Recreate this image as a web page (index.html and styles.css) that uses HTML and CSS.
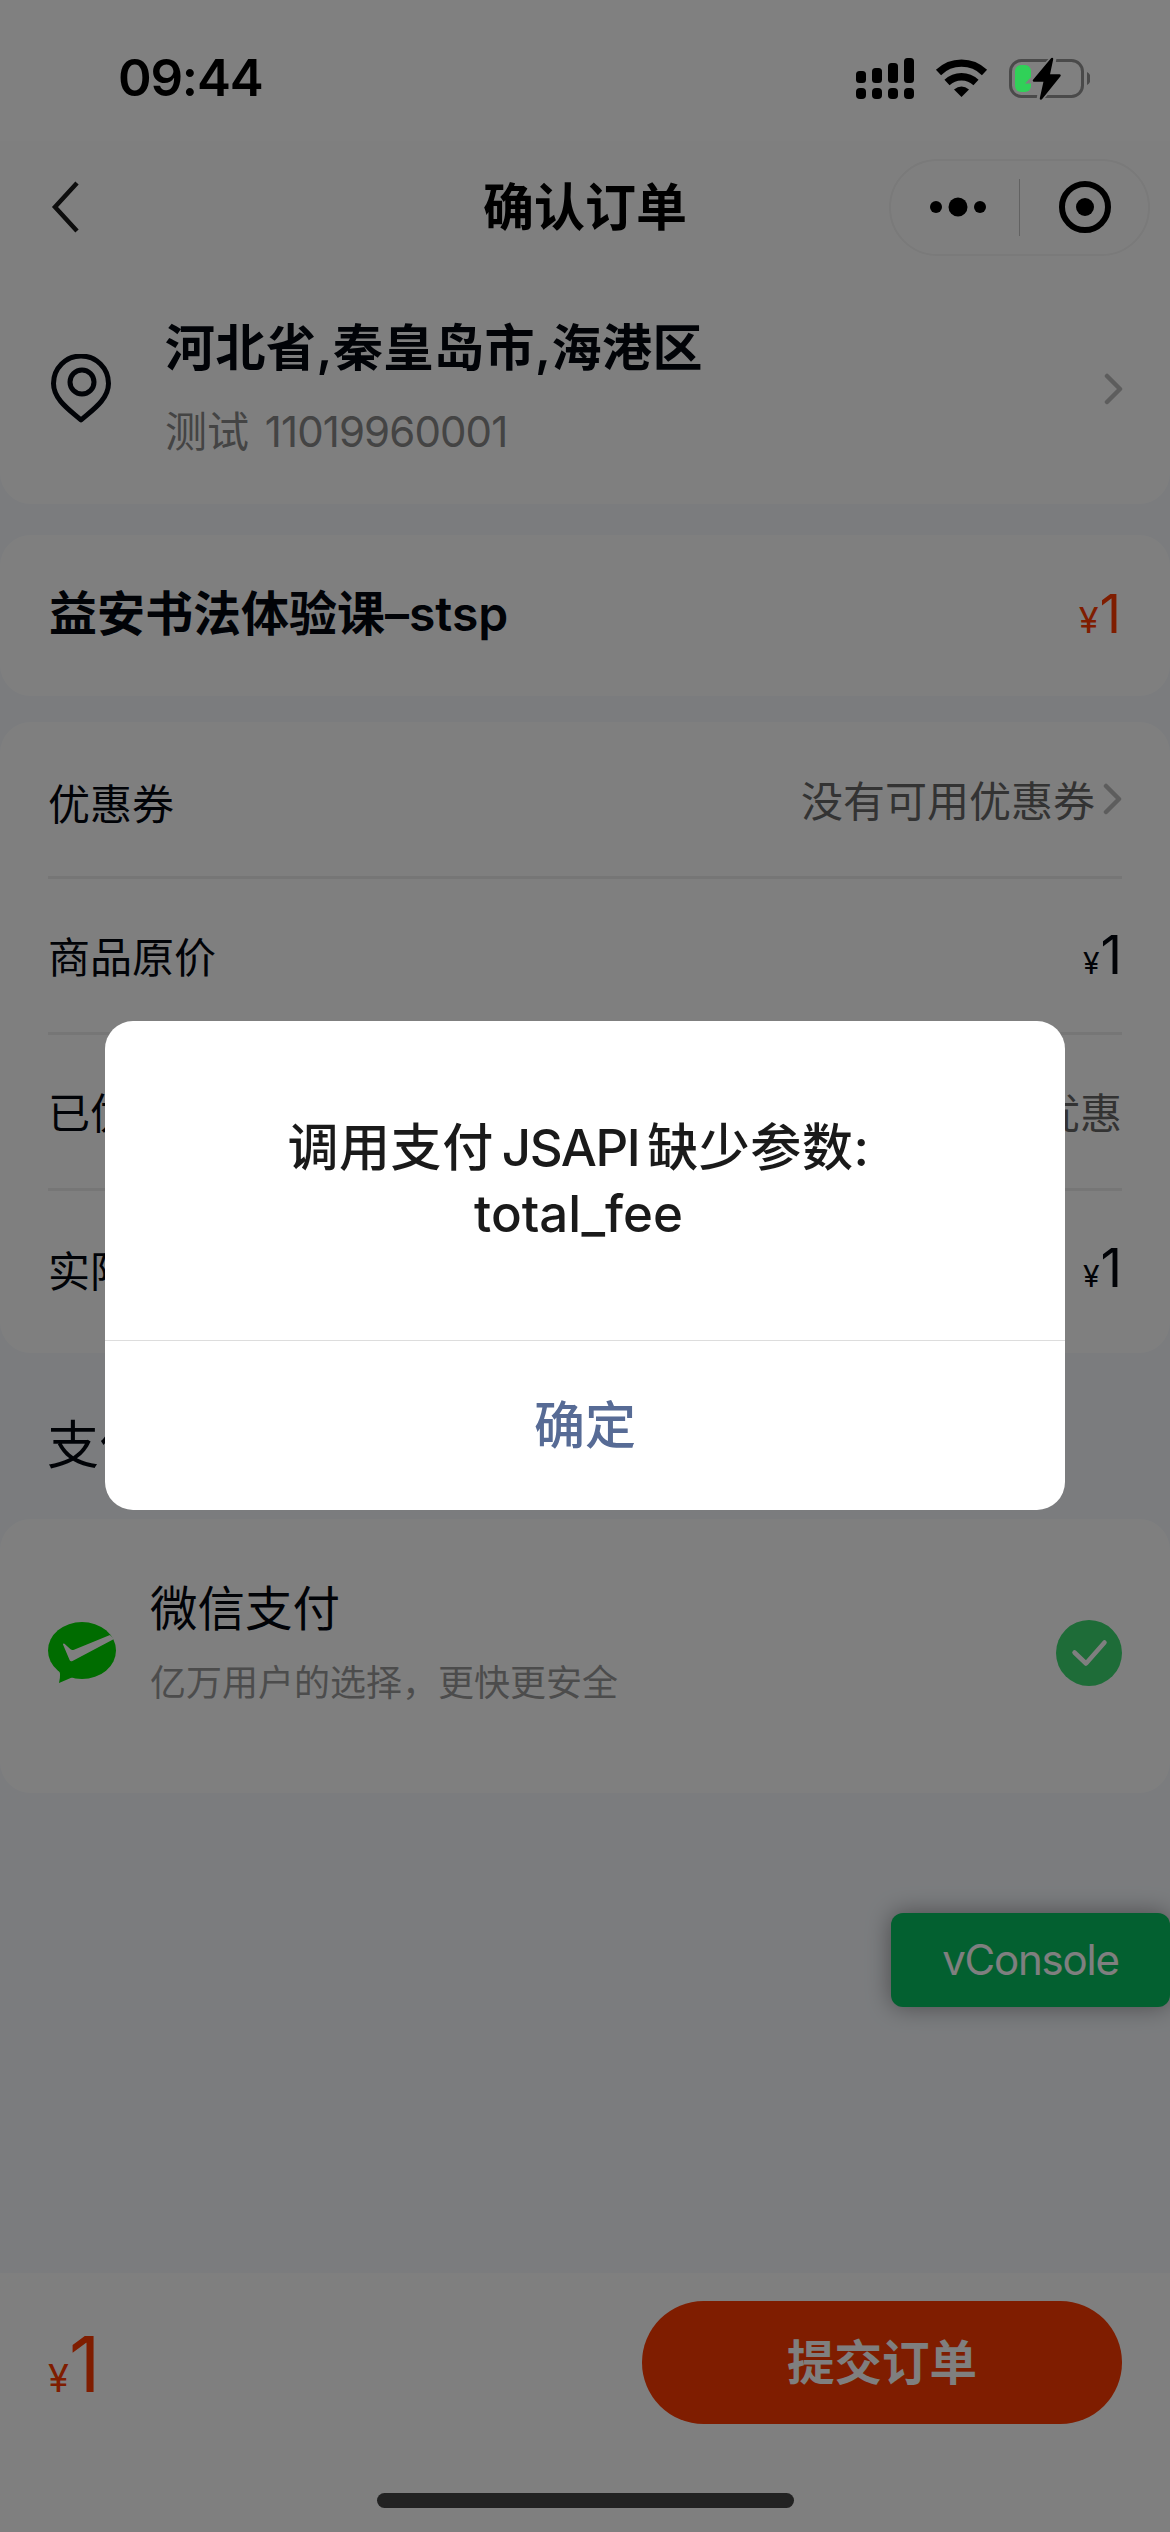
FILE: index.html
```html
<!DOCTYPE html>
<html lang="zh-CN">
<head>
<meta charset="utf-8">
<title>确认订单</title>
<link rel="stylesheet" href="styles.css">
</head>
<body>
<div class="screen">
  <header class="status-bar">
    <span class="time">09:44</span>
    <svg class="status-icons" width="240" height="50" viewBox="0 0 240 50">
      <g>
        <rect x="6" y="18" width="10" height="12" rx="3.5"/>
        <rect x="22" y="15" width="10" height="15" rx="3.5"/>
        <rect x="38" y="10" width="10" height="20" rx="3.5"/>
        <rect x="54" y="5" width="10" height="25" rx="3.5"/>
        <rect x="6" y="35" width="10" height="11" rx="4"/>
        <rect x="22" y="35" width="10" height="11" rx="4"/>
        <rect x="38" y="35" width="10" height="11" rx="4"/>
        <rect x="54" y="35" width="10" height="11" rx="4"/>
      </g>
      <g fill="none" stroke="#000" stroke-width="7.4">
        <path d="M88.500 19.500a33 33 0 0 1 46 0"/>
        <path d="M97 29.500a21 21 0 0 1 29 0"/>
      </g>
      <path d="M104 36.500q7.500-6 15 0l-7.500 7.500z"/>
      <rect x="160.500" y="7.500" width="72" height="36" rx="11" fill="none" stroke="#4a4a4a" stroke-width="3"/>
      <path d="M237 19a7.500 7.500 0 0 1 0 13z" fill="#4a4a4a"/>
      <rect x="165" y="12" width="16" height="27" rx="6" fill="#30d158"/>
      <path d="M203.500 5L182 27.500h11L189.500 46.500 211 22.500h-10.500z" stroke="#808080" stroke-width="6" fill="#808080"/>
      <path d="M202 6L184 27.500h11L191 45.500 209.500 22.500h-11z" stroke="#000" stroke-width="2.500" stroke-linejoin="round"/>
    </svg>
  </header>

  <nav class="nav-bar">
    <svg class="back" width="32" height="54" viewBox="0 0 32 54"><path d="M29 3L7 27l22 24"/></svg>
    <h1>确认订单</h1>
    <div class="capsule">
      <svg width="56" height="24" viewBox="0 0 56 24"><circle cx="6" cy="12" r="6"/><circle cx="28" cy="12" r="9.500"/><circle cx="50" cy="12" r="6"/></svg>
      <i></i>
      <svg width="52" height="52" viewBox="0 0 52 52"><circle cx="26" cy="26" r="23" fill="none" stroke="#000" stroke-width="6"/><circle cx="26" cy="26" r="9"/></svg>
    </div>
  </nav>

  <section class="card address">
    <svg class="pin" width="66" height="70" viewBox="0 0 66 70"><path d="M33 66C23 57 5.500 46 5.500 29.500a27.500 27.500 0 0 1 55 0C60.500 46 43 57 33 66z"/><circle cx="34" cy="28" r="12"/></svg>
    <div class="address-text">
      <p class="region">河北省,秦皇岛市,海港区</p>
      <p class="contact">测试 <span>11019960001</span></p>
    </div>
    <svg class="chevron" width="20" height="32" viewBox="0 0 20 32"><path d="M4 3l13 13L4 29"/></svg>
  </section>

  <section class="card goods">
    <h2>益安书法体验课–stsp</h2>
    <span class="price hot"><small>¥</small>1</span>
  </section>

  <section class="card bill">
    <div class="row coupon"><span>优惠券</span><span class="muted">没有可用优惠券<svg class="chevron" width="20" height="32" viewBox="0 0 20 32"><path d="M4 3l13 13L4 29"/></svg></span></div>
    <div class="row"><span>商品原价</span><span class="price"><small>¥</small>1</span></div>
    <div class="row"><span>已优惠</span><span class="muted">无优惠</span></div>
    <div class="row"><span>实际支付</span><span class="price"><small>¥</small>1</span></div>
  </section>

  <h3 class="section-title">支付方式</h3>

  <section class="card pay">
    <svg width="68" height="64" viewBox="0 0 68 64"><ellipse cx="34" cy="29.500" rx="34" ry="28.500" fill="#00d800"/><path d="M10 47q3.500 4 1 15l14-6z" fill="#00d800"/><path d="M15 23.500q0-1.500 1.500-.8l6 5.600q1.500 1.200 3.500.4L62 14l4 4-41.500 22q-2 1-2.800-.8z" fill="#fff"/></svg>
    <div class="pay-text">
      <p class="pay-name">微信支付</p>
      <p class="pay-desc">亿万用户的选择，更快更安全</p>
    </div>
    <svg width="66" height="66" viewBox="0 0 66 66"><circle cx="33" cy="33" r="33" fill="#3cd870"/><path d="M18.500 32.500L30 43.500 48.500 22.500" fill="none" stroke="#fff" stroke-width="4.500" stroke-linecap="round" stroke-linejoin="round"/></svg>
  </section>

  <footer class="submit-bar">
    <span class="total"><small>¥</small>1</span>
    <button class="submit">提交订单</button>
  </footer>

  <div class="vconsole">vConsole</div>
  <div class="mask"></div>
  <div class="home-indicator"></div>

  <div class="dialog">
    <div class="dialog-body"><span>调用支付<b>JSAPI</b>缺少参数:</span><span class="field">total_fee</span></div>
    <div class="dialog-ok">确定</div>
  </div>
</div>
</body>
</html>
```
FILE: styles.css
```css
* { box-sizing: border-box; margin: 0; padding: 0; }
body {
  width: 1170px;
  font-family: Inter, "Noto Sans CJK SC", sans-serif;
  color: #02060f;
}
.screen {
  position: relative;
  display: flex;
  flex-direction: column;
  width: 1170px;
  height: 2532px;
  overflow: hidden;
  background: #f6f9fd;
}
svg { display: block; flex: none; }

/* status bar stays above the dimming mask */
.status-bar {
  position: relative;
  z-index: 2;
  display: flex;
  justify-content: space-between;
  align-items: center;
  height: 141px;
  padding: 15px 80px 0 118px;
  background: #808080;
  color: #000;
}
.time { font-size: 51px; font-weight: 600; line-height: 60px; letter-spacing: -1.2px; }

.nav-bar {
  display: grid;
  grid-template-columns: 1fr auto 1fr;
  align-items: center;
  height: 132px;
  padding: 0 20px 0 48px;
  background: #fff;
  color: #000;
}
.back path { fill: none; stroke: #1a1a1a; stroke-width: 4.5; }
.nav-bar h1 { margin-left: -28px; padding-top: 2px; font-size: 51px; font-weight: 600; line-height: 70px; }
.capsule {
  justify-self: end;
  display: flex;
  align-items: center;
  width: 261px;
  height: 97px;
  padding-left: 39px;
  border: 2px solid #f4f4f4;
  border-radius: 49px;
}
.capsule i { width: 1px; height: 57px; margin: 0 39px 0 33px; background: #c4c4c4; }

.card { background: #fff; border-radius: 31px; }
.chevron path { fill: none; stroke: #bbb; stroke-width: 4.5; stroke-linecap: round; stroke-linejoin: round; }

.address {
  display: flex;
  align-items: center;
  height: 231px;
  padding: 0 47px 0 48px;
  border-radius: 0 0 31px 31px;
}
.pin path, .pin circle { fill: none; stroke: #02060f; stroke-width: 5; stroke-linejoin: round; }
.address-text { flex: 1; margin-left: 51px; padding-top: 3px; line-height: 84px; }
.region { font-size: 50px; font-weight: 600; letter-spacing: .5px; }
.contact { font-size: 42px; font-weight: 400; color: #888; }
.contact span { margin-left: 4px; letter-spacing: -.9px; }

.goods {
  display: flex;
  justify-content: space-between;
  align-items: center;
  height: 161px;
  margin-top: 31px;
  padding: 0 49px 4px;
}
.goods h2 { font-size: 48px; font-weight: 600; line-height: 70px; }
.price { padding-top: 6px; font-size: 53px; line-height: 70px; }
.price small { margin-right: 1px; font-size: 30px; }
.price.hot { color: #ff3a00; }
.price.hot small { font-size: 36px; }

.bill { height: 631px; margin-top: 26px; padding: 1px 48px 0; }
.row {
  display: flex;
  justify-content: space-between;
  align-items: center;
  height: 156px;
  border-bottom: 3px solid #ececec;
  font-size: 42px;
}
.row > span:first-child { padding-bottom: 2px; }
.row:last-child { border-bottom: 0; }
.row.coupon > span:first-child { padding: 3px 0 0; }
.muted { display: flex; align-items: center; gap: 7px; padding-bottom: 2px; color: #666; }

.section-title {
  height: 166px;
  padding: 0 47px;
  font-size: 52px;
  font-weight: 400;
  line-height: 186px;
}

.pay { display: flex; align-items: center; height: 274px; padding: 0 48px 6px; }
.pay-text { flex: 1; margin-left: 34px; padding-bottom: 14px; line-height: 74px; }
.pay-name { font-size: 47.5px; }
.pay-desc { font-size: 36px; color: #999; }

.submit-bar {
  display: flex;
  justify-content: space-between;
  align-items: flex-start;
  height: 259px;
  margin-top: auto;
  padding: 28px 48px 0;
  background: #fff;
}
.total { padding-top: 2px; color: #ff3a00; font-size: 77px; line-height: 123px; letter-spacing: -1px; }
.total small { margin-right: 1px; font-size: 38px; }
.submit {
  width: 480px;
  height: 123px;
  border: 0;
  border-radius: 62px;
  background: #ff3a00;
  color: #fff;
  font: 600 47.5px/123px Inter, "Noto Sans CJK SC", sans-serif;
}

.vconsole {
  position: absolute;
  left: 891px;
  top: 1913px;
  width: 279px;
  height: 94px;
  border-radius: 12px;
  background: #07c160;
  box-shadow: 0 0 24px rgba(0, 0, 0, .4);
  color: #fff;
  font-size: 42px;
  line-height: 94px;
  letter-spacing: -1.2px;
  text-align: center;
}
.mask { position: absolute; inset: 0; background: rgba(0, 0, 0, .5); }
.home-indicator {
  position: absolute;
  left: 377px;
  bottom: 24px;
  width: 417px;
  height: 15px;
  border-radius: 8px;
  background: #222;
}

.dialog {
  position: absolute;
  left: 105px;
  top: 1021px;
  display: flex;
  flex-direction: column;
  width: 960px;
  height: 489px;
  border-radius: 28px;
  background: #fff;
  font-weight: 500;
  font-size: 51px;
}
.dialog-body {
  display: flex;
  flex-direction: column;
  justify-content: center;
  align-items: center;
  height: 322px;
  padding-right: 13px;
  border-bottom: 1px solid #ddd;
  color: #1a1a1a;
  line-height: 66px;
}
.dialog-body b { margin: 0 8px; font-weight: 500; letter-spacing: -1.5px; }
.dialog-body span:first-child { letter-spacing: .6px; }
.dialog-ok { color: #576b95; line-height: 169px; text-align: center; }
```
